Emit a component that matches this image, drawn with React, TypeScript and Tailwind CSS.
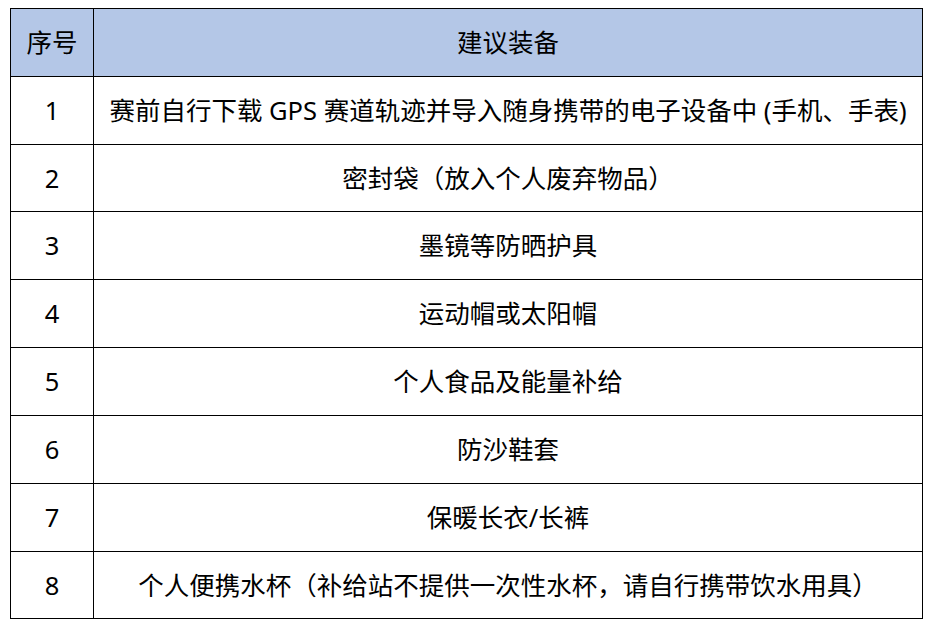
const items = [
  '赛前自行下载 GPS 赛道轨迹并导入随身携带的电子设备中 (手机、手表)',
  '密封袋（放入个人废弃物品）',
  '墨镜等防晒护具',
  '运动帽或太阳帽',
  '个人食品及能量补给',
  '防沙鞋套',
  '保暖长衣/长裤',
  '个人便携水杯（补给站不提供一次性水杯，请自行携带饮水用具）',
];

// row heights incl. the bottom border, so lines fall where the sheet has them
const heights = ['h-[68px]', 'h-[67px]', 'h-[68px]', 'h-[68px]', 'h-[68px]', 'h-[68px]', 'h-[68px]', 'h-[66px]'];

export default function App() {
  return (
    <div className="w-[933px] h-[628px] bg-white pt-2 pl-[10px] text-black text-[25.5px] font-['Noto_Sans','Noto_Sans_CJK_SC',sans-serif]">
      <div className="w-[913px] border border-black flex flex-col">
        {/* Header */}
        <div className="flex h-[68px] border-b border-black bg-[#b4c7e7]">
          <div className="w-[83px] shrink-0 border-r border-black flex items-center justify-center">序号</div>
          <div className="flex-1 flex items-center justify-center">建议装备</div>
        </div>

        {items.map((item, index) => (
          <div
            key={item}
            className={`flex ${heights[index]} ${index < items.length - 1 ? 'border-b border-black' : ''}`}
          >
            <div className="w-[83px] shrink-0 border-r border-black flex items-center justify-center">{index + 1}</div>
            <div className="flex-1 flex items-center justify-center whitespace-nowrap">{item}</div>
          </div>
        ))}
      </div>
    </div>
  );
}
